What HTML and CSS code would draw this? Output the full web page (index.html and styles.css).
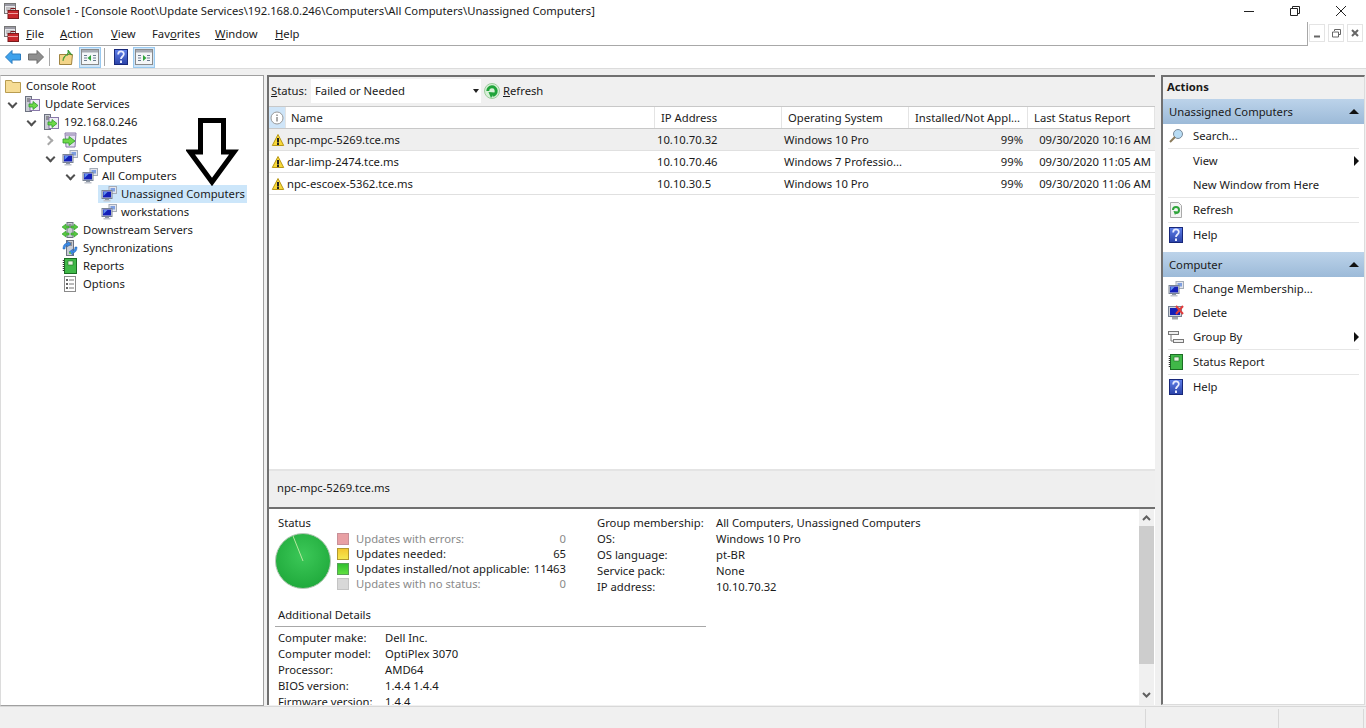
FILE: index.html
```html
<!DOCTYPE html>
<html lang="en">
<head>
<meta charset="utf-8">
<title>Console1</title>
<link rel="stylesheet" href="styles.css">
</head>
<body>
<svg class="defs" width="0" height="0" aria-hidden="true">
  <defs>
    <linearGradient id="gb" x1="0" y1="0" x2="0" y2="1"><stop offset="0" stop-color="#5f80ea"/><stop offset="1" stop-color="#2a42a8"/></linearGradient>
    <symbol id="i-mmc" viewBox="0 0 16 16">
      <rect x="1.500" y="0.500" width="11" height="10" fill="#e8e8ec" stroke="#777"/>
      <rect x="2" y="1" width="10" height="2" fill="#9a9aa4"/>
      <path d="M3 5h8M3 7h8" stroke="#999"/>
      <rect x="5" y="7.500" width="10.500" height="8" fill="#c8282c" stroke="#7a1a1c"/>
      <rect x="8" y="5.500" width="4" height="2" fill="none" stroke="#7a1a1c"/>
      <path d="M5 10.500h10" stroke="#f0a0a0"/>
    </symbol>
    <symbol id="i-pcs" viewBox="0 0 16 16">
      <rect x="8" y="0.500" width="7.500" height="7" fill="#e4e6ec" stroke="#a4acb8"/>
      <rect x="9.500" y="2" width="4.500" height="3.500" fill="#7f9fe0"/>
      <rect x="1" y="4.500" width="10" height="8" fill="#d8dce4" stroke="#7a8494"/>
      <rect x="2" y="5.500" width="8" height="6" fill="#1420b8"/>
      <path d="M2.500 6h4l-4 4z" fill="#5f90ee"/>
      <rect x="4" y="13" width="4" height="1" fill="#8a94a4"/>
      <rect x="2.500" y="14" width="7" height="1.500" fill="#c0c4cc"/>
    </symbol>
    <symbol id="i-server" viewBox="0 0 16 16">
      <rect x="1.500" y="0.500" width="6" height="15" fill="#c9ccd4" stroke="#6d7280"/>
      <path d="M3 3h3M3 5h3" stroke="#555"/>
      <rect x="6" y="3.500" width="9.500" height="11" fill="#f0ecf6" stroke="#8878a8"/>
      <path d="M5 8h4V5.500l5 4-5 4V11H5z" fill="#6ed848" stroke="#2c9c2c" stroke-width=".8"/>
    </symbol>
    <symbol id="i-updates" viewBox="0 0 16 16">
      <path d="M3 1h11l-1 14H4z" fill="#e4e0f0" stroke="#8878a8"/>
      <path d="M4 3h9" stroke="#8878a8"/>
      <path d="M1 7h6V4.500l6 4.500-6 4.500V11H1z" fill="#6ed848" stroke="#2c9c2c" stroke-width=".8"/>
    </symbol>
    <symbol id="i-down" viewBox="0 0 16 16">
      <rect x="5" y="0.500" width="6" height="15" fill="#c9ccd4" stroke="#6d7280"/>
      <path d="M6.500 3h3M6.500 5h3" stroke="#555"/>
      <path d="M0 5l4-3v2h3v2H4v2z" fill="#58c840" stroke="#2c9c2c" stroke-width=".6"/>
      <path d="M16 5l-4-3v2H9v2h3v2z" fill="#58c840" stroke="#2c9c2c" stroke-width=".6"/>
      <path d="M0 12l4-3v2h3v2H4v2z" fill="#58c840" stroke="#2c9c2c" stroke-width=".6"/>
      <path d="M16 12l-4-3v2H9v2h3v2z" fill="#58c840" stroke="#2c9c2c" stroke-width=".6"/>
    </symbol>
    <symbol id="i-sync" viewBox="0 0 16 16">
      <rect x="4.500" y="0.500" width="7" height="15" fill="#c9ccd4" stroke="#6d7280"/>
      <path d="M6 3h4M6 5h4" stroke="#555"/>
      <path d="M1 9c0-4 2-6 5-6L5 1l4 3-4 3 1-2c-2 0-3 2-3 4z" fill="#3c8ce8" stroke="#1c5cb0" stroke-width=".5"/>
      <path d="M15 7c0 4-2 6-5 6l1 2-4-3 4-3-1 2c2 0 3-2 3-4z" fill="#3c8ce8" stroke="#1c5cb0" stroke-width=".5"/>
      <circle cx="8" cy="13" r="1" fill="#58c840"/>
    </symbol>
    <symbol id="i-report" viewBox="0 0 16 16">
      <rect x="2.500" y="0.500" width="12" height="15" fill="#40b848" stroke="#1b6e24"/>
      <path d="M1.500 2v12" stroke="#333" stroke-width="1.500" stroke-dasharray="1 1"/>
      <rect x="6" y="3" width="5" height="4" fill="#e8f4e0" stroke="#1b6e24" stroke-width=".6"/>
    </symbol>
    <symbol id="i-options" viewBox="0 0 16 16">
      <rect x="2.500" y="0.500" width="11" height="15" fill="#fff" stroke="#8a8a8a"/>
      <path d="M4 4h2M4 8h2M4 12h2" stroke="#333" stroke-width="1.500"/>
      <path d="M7 4h5M7 8h5M7 12h5" stroke="#777"/>
    </symbol>
    <symbol id="i-help" viewBox="0 0 14 16">
      <rect x="0.500" y="0.500" width="13" height="15" fill="url(#gb)" stroke="#18287a"/>
      <path d="M4.200 5.500c0-4 5.600-4 5.600-.5 0 2.500-2.800 2.500-2.800 5" fill="none" stroke="#e8ecff" stroke-width="1.800"/>
      <rect x="6" y="11.500" width="2" height="2.500" fill="#e8ecff"/>
    </symbol>
    <symbol id="i-warn" viewBox="0 0 14 14">
      <path d="M7 1.500l5.700 11H1.300z" fill="#f8d838" stroke="#b89818" stroke-linejoin="round"/>
      <rect x="6" y="5" width="2" height="4.500" fill="#222"/>
      <rect x="6" y="10" width="2" height="2" fill="#222"/>
    </symbol>
    <symbol id="i-refresh" viewBox="0 0 16 16">
      <circle cx="8" cy="8" r="7.500" fill="#d8f0d8" stroke="#9ccc9c"/>
      <path d="M3.800 8a4.200 4.200 0 1 1 4.700 4.200" fill="none" stroke="#1fa43a" stroke-width="3"/>
      <path d="M4.500 9l6 .5L7 15z" fill="#1fa43a"/>
    </symbol>
    <symbol id="i-pane" viewBox="0 0 18 16">
      <rect x="0.500" y="0.500" width="17" height="15" fill="#f4f6f8" stroke="#8a8a8a"/>
      <rect x="1" y="1" width="16" height="2.500" fill="#a8acb4"/>
      <path d="M3 6.500h3M3 9h3M3 11.500h3M12 6.500h3M12 9h3M12 11.500h3" stroke="#6a7a90"/>
    </symbol>
  </defs>
</svg>

<div class="app">
  <header class="titlebar">
    <svg class="ico16"><use href="#i-mmc"/></svg>
    <span class="title">Console1 - [Console Root\Update Services\192.168.0.246\Computers\All Computers\Unassigned Computers]</span>
    <div class="winctl">
      <svg width="12" height="12" viewBox="0 0 12 12"><path d="M1 6.500h10" stroke="#222"/></svg>
      <svg width="12" height="12" viewBox="0 0 12 12"><path d="M3.500 3V1.500h7v7H9M1.500 3.500h7v7h-7z" fill="none" stroke="#222"/></svg>
      <svg width="12" height="12" viewBox="0 0 12 12"><path d="M1 1l10 10M11 1L1 11" stroke="#222"/></svg>
    </div>
  </header>

  <nav class="menubar">
    <svg class="ico16"><use href="#i-mmc"/></svg>
    <ul class="menu">
      <li class="m-file"><u>F</u>ile</li>
      <li class="m-action"><u>A</u>ction</li>
      <li class="m-view"><u>V</u>iew</li>
      <li class="m-fav">Fav<u>o</u>rites</li>
      <li class="m-win"><u>W</u>indow</li>
      <li class="m-help"><u>H</u>elp</li>
    </ul>
    <div class="mdictl">
      <span class="mdibtn"><svg width="9" height="9" viewBox="0 0 9 9"><path d="M1 7.500h6" stroke="#666" stroke-width="2"/></svg></span>
      <span class="mdibtn"><svg width="9" height="9" viewBox="0 0 9 9"><path d="M2.500 2V.5h6v5H7M.5 3h6v5h-6z" fill="none" stroke="#666"/></svg></span>
      <span class="mdibtn"><svg width="9" height="9" viewBox="0 0 9 9"><path d="M1 1l6 6M7 1L1 7" stroke="#666" stroke-width="2"/></svg></span>
    </div>
  </nav>

  <div class="toolbar">
    <svg class="tb-arrow" width="16" height="14" viewBox="0 0 16 14"><path d="M.5 7L7 .5V4h8.500v6H7v3.500z" fill="#3ea2ec" stroke="#2a7cc0"/></svg>
    <svg class="tb-arrow" width="16" height="14" viewBox="0 0 16 14"><path d="M15.500 7L9 .5V4H.5v6H9v3.500z" fill="#8f8f8f" stroke="#6e6e6e"/></svg>
    <i class="tb-sep"></i>
    <svg class="tb-up" width="15" height="16" viewBox="0 0 15 16"><path d="M.5 5.500h13l-1 10H.5z" fill="#f3d488" stroke="#a08440"/><path d="M4 12c0-4 2-6 5-6V3.500L13 6 9 1v2" fill="#58b83c" stroke="#2c8a2c" stroke-width=".8"/></svg>
    <span class="tb-btn"><svg width="18" height="16"><use href="#i-pane"/><path d="M10 6v6l-3.500-3z" fill="#2ea43a"/></svg></span>
    <i class="tb-sep sep2"></i>
    <svg class="tb-help" width="14" height="16"><use href="#i-help"/></svg>
    <span class="tb-btn"><svg width="18" height="16"><use href="#i-pane"/><path d="M8 6v6l3.500-3z" fill="#2ea43a"/></svg></span>
  </div>

  <main class="panes">
    <aside class="tree">
      <div class="node root"><svg class="ico16" viewBox="0 0 16 16"><path d="M.5 2.500h6l1 2h8v10H.5z" fill="#f6dc94" stroke="#b89c50"/></svg><span>Console Root</span></div>
      <div class="node d0"><span class="tw open"></span><svg class="ico16"><use href="#i-server"/></svg><span>Update Services</span></div>
      <div class="node d1"><span class="tw open"></span><svg class="ico16"><use href="#i-server"/></svg><span>192.168.0.246</span></div>
      <div class="node d2"><span class="tw closed"></span><svg class="ico16"><use href="#i-updates"/></svg><span>Updates</span></div>
      <div class="node d2"><span class="tw open"></span><svg class="ico16"><use href="#i-pcs"/></svg><span>Computers</span></div>
      <div class="node d3"><span class="tw open"></span><svg class="ico16"><use href="#i-pcs"/></svg><span>All Computers</span></div>
      <div class="node d4 sel"><svg class="ico16"><use href="#i-pcs"/></svg><span>Unassigned Computers</span></div>
      <div class="node d4"><svg class="ico16"><use href="#i-pcs"/></svg><span>workstations</span></div>
      <div class="node d2"><span class="tw"></span><svg class="ico16"><use href="#i-down"/></svg><span>Downstream Servers</span></div>
      <div class="node d2"><span class="tw"></span><svg class="ico16"><use href="#i-sync"/></svg><span>Synchronizations</span></div>
      <div class="node d2"><span class="tw"></span><svg class="ico16"><use href="#i-report"/></svg><span>Reports</span></div>
      <div class="node d2"><span class="tw"></span><svg class="ico16"><use href="#i-options"/></svg><span>Options</span></div>
      <svg class="callout" width="54" height="71" viewBox="0 0 54 71"><path d="M14.500 3.500h23V35H48L26 65 4 35h10.500z" fill="none" stroke="#000" stroke-width="5"/></svg>
    </aside>

    <section class="center">
      <div class="filter">
        <span class="flabel"><u>S</u>tatus:</span>
        <span class="select">Failed or Needed<b class="caret"></b></span>
        <svg class="ico16"><use href="#i-refresh"/></svg>
        <span class="flink"><u>R</u>efresh</span>
      </div>
      <div class="grid head">
        <span class="c-i hinfo"><svg width="14" height="14" viewBox="0 0 14 14"><circle cx="7" cy="7" r="6" fill="#fff" stroke="#999"/><path d="M7 6v4.500M7 3.500v1.500" stroke="#555"/></svg></span>
        <span class="c-n">Name</span><span class="c-h">IP Address</span><span class="c-h">Operating System</span><span class="c-h">Installed/Not Appl...</span><span class="c-h">Last Status Report</span>
      </div>
      <div class="list">
        <div class="grid row first"><span class="c-i"><svg class="warn"><use href="#i-warn"/></svg></span><span class="c-n">npc-mpc-5269.tce.ms</span><span class="c-d">10.10.70.32</span><span class="c-d">Windows 10 Pro</span><span class="c-d num pct">99%</span><span class="c-d num">09/30/2020 10:16 AM</span></div>
        <div class="grid row"><span class="c-i"><svg class="warn"><use href="#i-warn"/></svg></span><span class="c-n">dar-limp-2474.tce.ms</span><span class="c-d">10.10.70.46</span><span class="c-d">Windows 7 Professio...</span><span class="c-d num pct">99%</span><span class="c-d num">09/30/2020 11:05 AM</span></div>
        <div class="grid row"><span class="c-i"><svg class="warn"><use href="#i-warn"/></svg></span><span class="c-n">npc-escoex-5362.tce.ms</span><span class="c-d">10.10.30.5</span><span class="c-d">Windows 10 Pro</span><span class="c-d num pct">99%</span><span class="c-d num">09/30/2020 11:06 AM</span></div>
      </div>
      <div class="caption">npc-mpc-5269.tce.ms</div>
      <div class="details">
        <div class="dbody">
          <div class="summary">
            <div class="statusbox">
              <div class="stitle">Status</div>
              <div class="chart">
                <svg class="pie" width="56" height="56" viewBox="0 0 56 56"><defs><radialGradient id="pg" cx=".5" cy=".4" r=".6"><stop offset="0" stop-color="#3cc858"/><stop offset="1" stop-color="#20aa3c"/></radialGradient></defs><circle cx="28" cy="28" r="27.500" fill="url(#pg)" stroke="#b8c8b8"/><path d="M28 28L18 3" stroke="#b8e8a0" stroke-width="1"/></svg>
                <dl class="legend">
                  <div class="lg dim"><i class="sw red"></i><dt>Updates with errors:</dt><dd>0</dd></div>
                  <div class="lg"><i class="sw yellow"></i><dt>Updates needed:</dt><dd>65</dd></div>
                  <div class="lg"><i class="sw green"></i><dt>Updates installed/not applicable:</dt><dd>11463</dd></div>
                  <div class="lg dim"><i class="sw gray"></i><dt>Updates with no status:</dt><dd>0</dd></div>
                </dl>
              </div>
            </div>
            <dl class="props">
              <dt>Group membership:</dt><dd>All Computers, Unassigned Computers</dd>
              <dt>OS:</dt><dd>Windows 10 Pro</dd>
              <dt>OS language:</dt><dd>pt-BR</dd>
              <dt>Service pack:</dt><dd>None</dd>
              <dt>IP address:</dt><dd>10.10.70.32</dd>
            </dl>
          </div>
          <div class="addl">Additional Details</div>
          <dl class="props2">
            <dt>Computer make:</dt><dd>Dell Inc.</dd>
            <dt>Computer model:</dt><dd>OptiPlex 3070</dd>
            <dt>Processor:</dt><dd>AMD64</dd>
            <dt>BIOS version:</dt><dd>1.4.4 1.4.4</dd>
            <dt>Firmware version:</dt><dd>1.4.4</dd>
          </dl>
        </div>
        <div class="vscroll">
          <svg width="15" height="17" viewBox="0 0 15 17"><path d="M4 11l3.500-3.500L11 11" fill="none" stroke="#606060" stroke-width="2"/></svg>
          <div class="thumb"></div>
          <svg class="sdown" width="15" height="17" viewBox="0 0 15 17"><path d="M4 7l3.500 3.500L11 7" fill="none" stroke="#606060" stroke-width="2"/></svg>
        </div>
      </div>
    </section>

    <aside class="actions">
      <div class="ahead">Actions</div>
      <div class="agroup">Unassigned Computers<b class="up"></b></div>
      <ul class="alist">
        <li class="sp"><svg class="ico16" viewBox="0 0 16 16"><circle cx="10" cy="6" r="4.500" fill="#b8dcf4" stroke="#7a8a9a"/><path d="M7 9l-5 5" stroke="#8a7a5a" stroke-width="2"/></svg><span>Search...</span></li>
        <li><i class="noico"></i><span>View</span><b class="more"></b></li>
        <li class="sp"><i class="noico"></i><span>New Window from Here</span></li>
        <li class="sp"><svg class="ico16" viewBox="0 0 16 16"><path d="M2.500.5h8l3 3v12h-11z" fill="#f4f4f4" stroke="#aaa"/><path d="M5 8a3 3 0 1 1 3 3" fill="none" stroke="#2ea43a" stroke-width="2"/><path d="M5.500 9l4 .5-2.500 3.500z" fill="#2ea43a"/></svg><span>Refresh</span></li>
        <li><svg class="ico16" viewBox="0 0 14 16"><use href="#i-help"/></svg><span>Help</span></li>
      </ul>
      <div class="agroup g2">Computer<b class="up"></b></div>
      <ul class="alist">
        <li><svg class="ico16"><use href="#i-pcs"/></svg><span>Change Membership...</span></li>
        <li><svg class="ico16" viewBox="0 0 16 16"><rect x=".5" y="1.500" width="13" height="10" fill="#d0d4dc" stroke="#7a8494"/><rect x="2" y="3" width="10" height="7" fill="#1420b8"/><rect x="4" y="12" width="6" height="2.500" fill="#a0a4ac"/><path d="M8 1l7 8M15 1L8 9" stroke="#e03c3c" stroke-width="2"/></svg><span>Delete</span></li>
        <li class="sp"><svg class="ico16" viewBox="0 0 16 16"><rect x=".5" y="2.500" width="10" height="3" fill="#eee" stroke="#777"/><rect x="5.500" y="10.500" width="10" height="3" fill="#eee" stroke="#777"/><path d="M3 6v6h2" fill="none" stroke="#777"/></svg><span>Group By</span><b class="more"></b></li>
        <li class="sp"><svg class="ico16"><use href="#i-report"/></svg><span>Status Report</span></li>
        <li><svg class="ico16" viewBox="0 0 14 16"><use href="#i-help"/></svg><span>Help</span></li>
      </ul>
    </aside>
  </main>

  <footer class="statusbar"><i class="s1"></i><i class="s2"></i><i class="s3"></i></footer>
</div>
</body>
</html>
```
FILE: styles.css
```css
* { box-sizing: border-box; }
html, body { margin: 0; padding: 0; }
body { width: 1366px; height: 728px; overflow: hidden; background: #f0f0f0; color: #1a1a1a; font: 11.25px/16px "Noto Sans", "Open Sans", sans-serif; }
.defs { position: absolute; }
ul, dl, dd, dt { margin: 0; padding: 0; list-style: none; }
.ico16 { width: 16px; height: 16px; flex: none; display: block; }
.warn { width: 14px; height: 14px; flex: none; display: block; }
.app { display: flex; flex-direction: column; height: 728px; }

.titlebar { height: 22px; background: #fff; display: flex; align-items: center; padding-left: 3px; }
.title { margin-left: 4px; white-space: nowrap; }
.winctl { margin-left: auto; display: flex; gap: 34px; padding-right: 19px; align-items: center; }

.menubar { height: 24px; background: #fff; display: flex; align-items: center; padding-left: 3px; border-bottom: 1px solid #a8a8a8; position: relative; }
.menu { display: flex; margin-left: 7px; }
.menu li { white-space: nowrap; }
.m-file { width: 34px; } .m-action { width: 51px; } .m-view { width: 41px; } .m-fav { width: 63px; } .m-win { width: 60px; }
.mdictl { margin-left: auto; align-self: stretch; width: 59px; display: flex; gap: 3px; padding: 2px 3px 0 1px; background: #fff; border-left: 1px solid #a8a8a8; margin-bottom: -1px; }
.mdibtn { width: 16px; height: 18px; display: flex; align-items: center; justify-content: center; border: 1px solid #e4e4e4; background: #fff; }

.toolbar { height: 23px; background: #fff; display: flex; align-items: center; padding: 0 0 0 5px; border-bottom: 1px solid #dcdcdc; }
.tb-arrow { margin-right: 7px; }
.tb-arrow + .tb-arrow { margin-right: 5px; }
.tb-sep { width: 1px; height: 18px; background: #a8a8a8; }
.tb-up { margin-left: 9px; margin-right: 5px; }
.tb-btn { width: 22px; height: 21px; background: #cfe5f8; border: 1px solid #99c9ef; display: flex; align-items: center; justify-content: center; }
.sep2 { margin-left: 3px; }
.tb-help { margin-left: 9px; margin-right: 5px; }

.panes { flex: 1; min-height: 0; display: grid; grid-template-columns: 264px 891px 204px; column-gap: 3px; padding: 6px 1px 0 0; background: #f0f0f0; align-items: stretch; }

.tree { background: #fff; border: 1px solid #a0a0a0; border-left-color: #dcdcdc; padding-top: 1px; position: relative; }
.node { height: 18px; display: flex; align-items: center; white-space: nowrap; }
.node svg.ico16 { margin-right: 5px; }
.node.d3 svg.ico16, .node.d4 svg.ico16 { margin-right: 4px; }
.root { padding-left: 4px; }
.d0 { padding-left: 5px; } .d1 { padding-left: 24px; } .d2 { padding-left: 43px; } .d3 { padding-left: 63px; } .d4 { padding-left: 100px; }
.sel { background: linear-gradient(#cce6fa, #cce6fa) 97px 0 / 149px 18px no-repeat; }
.tw { width: 18px; height: 16px; flex: none; position: relative; }
.tw.open::before { content: ""; position: absolute; left: 3px; top: 4px; width: 5px; height: 5px; border: solid #505050; border-width: 0 2px 2px 0; transform: rotate(45deg); }
.tw.closed::before { content: ""; position: absolute; left: 1px; top: 5px; width: 5px; height: 5px; border: solid #a8a8a8; border-width: 0 2px 2px 0; transform: rotate(-45deg); }
.callout { position: absolute; left: 185px; top: 41px; }

.center { display: flex; flex-direction: column; background: #fff; border-left: 2px solid #707070; border-top: 2px solid #707070; min-width: 0; margin: 0 3px 1px 0; }
.filter { height: 30px; background: #f0f0f0; display: flex; align-items: center; padding: 0 0 2px 2px; border-bottom: 1px solid #c8c8c8; }
.flabel { width: 40px; flex: none; }
.select { width: 170px; height: 24px; background: #fff; display: flex; align-items: center; padding-left: 4px; position: relative; margin-right: 3px; }
.caret { position: absolute; right: 2px; top: 10px; border: 3px solid transparent; border-top: 4px solid #222; border-bottom: 0; }
.flink { margin-left: 3px; }

.grid { display: grid; grid-template-columns: 17px 369px 127px 127px 119px 127px; align-items: center; }
.head { height: 22px; background: #fff; border-bottom: 1px solid #c8c8c8; }
.head > span { height: 21px; display: flex; align-items: center; border-right: 1px solid #e4e4e4; white-space: nowrap; }
.hinfo { background: #cfe5f8; justify-content: center; }
.c-i { display: flex; align-items: center; justify-content: center; }
.head .c-n { padding-left: 5px; }
.c-h { padding-left: 6px; }
.list { flex: 1; min-height: 0; }
.row { height: 22px; border-bottom: 1px solid #e0e0e0; white-space: nowrap; }
.row.first { background: #efefef; }
.row .c-n { padding-left: 1px; }
.c-d { padding-left: 2px; overflow: hidden; }
.num { text-align: right; padding-right: 4px; }
.pct { padding-right: 5px; }
.caption { height: 40px; background: #efefef; border-top: 2px solid #e4e4e4; border-bottom: 2px solid #707070; padding: 9px 0 0 8px; }

.details { height: 196px; display: flex; background: #fff; overflow: hidden; }
.dbody { flex: 1; min-width: 0; height: 196px; overflow: hidden; padding: 6px 0 0 6px; }
.summary { display: flex; height: 92px; }
.statusbox { width: 322px; }
.stitle { padding-left: 3px; height: 16px; }
.chart { display: flex; align-items: flex-start; }
.pie { flex: none; margin-top: 2px; }
.legend { margin-left: 6px; width: 229px; }
.lg { display: flex; height: 15px; align-items: center; line-height: 15px; white-space: nowrap; }
.lg dd { margin-left: auto; }
.dim { color: #8a8a8a; }
.sw { width: 12px; height: 12px; flex: none; margin-right: 7px; border: 1px solid #b0b0b0; }
.red { background: #e8a0a4; border-color: #c89098; }
.yellow { background: linear-gradient(#f4c830, #f4e850); border-color: #b09830; }
.green { background: linear-gradient(#30c030, #60e040); border-color: #58a058; }
.gray { background: #d8d8d8; border-color: #c4c4c4; }
.props { display: grid; grid-template-columns: 119px auto; grid-auto-rows: 16px; white-space: nowrap; }
.addl { width: 431px; height: 20px; padding-left: 3px; border-bottom: 1px solid #a8a8a8; }
.props2 { display: grid; grid-template-columns: 107px auto; grid-auto-rows: 16px; padding: 3px 0 0 3px; white-space: nowrap; }

.vscroll { width: 15px; height: 196px; margin-right: 1px; background: #f0f0f0; display: flex; flex-direction: column; }
.vscroll svg { flex: none; }
.thumb { height: 138px; background: #cdcdcd; }
.sdown { margin-top: auto; margin-bottom: 2px; }

.actions { background: #fff; border: 1px solid #dcdcdc; border-left: 2px solid #707070; border-top: 2px solid #707070; margin-bottom: 1px; }
.ahead { height: 22px; background: #f0f0f0; font-weight: 700; padding: 2px 0 0 4px; }
.agroup { height: 25px; display: flex; align-items: center; padding-left: 6px; position: relative; background: linear-gradient(#bcd3ea, #9cbad8); }
.g2 { margin-top: 5px; }
.up { position: absolute; right: 5px; top: 10px; border: 5px solid transparent; border-bottom: 5px solid #111; border-top: 0; }
.alist { padding: 0 5px 0 5px; }
.alist li { height: 24px; display: flex; align-items: center; position: relative; gap: 9px; white-space: nowrap; }
.alist li.sp { height: 25px; border-bottom: 1px solid #e6e6e6; }
.noico { width: 16px; flex: none; }
.more { position: absolute; right: 0; top: 7px; border: 5px solid transparent; border-left: 5px solid #111; border-right: 0; }

.statusbar { height: 22px; background: #f0f0f0; border-top: 1px solid #d8d8d8; position: relative; }
.statusbar i { position: absolute; top: 2px; bottom: 0; width: 1px; background: #d8d8d8; }
.s1 { left: 1145px; } .s2 { left: 1278px; } .s3 { left: 1363px; }
```
